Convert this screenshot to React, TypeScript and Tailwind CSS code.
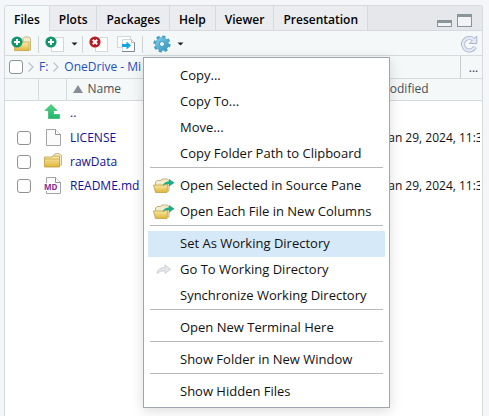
import React from "react";

const tabs = ["Files", "Plots", "Packages", "Help", "Viewer", "Presentation"];

function Defs() {
  return (
    <svg className="absolute size-0" aria-hidden="true">
      <defs>
        <linearGradient id="gold" x1="0" y1="0" x2="0" y2="1">
          <stop offset="0" stopColor="#fbeeb0" />
          <stop offset="1" stopColor="#dfb53a" />
        </linearGradient>
        <linearGradient id="gear" x1="0" y1="0" x2="1" y2="1">
          <stop offset="0" stopColor="#8ad0ea" />
          <stop offset="1" stopColor="#2b94c0" />
        </linearGradient>
        <linearGradient id="up" x1="0" y1="0" x2="0" y2="1">
          <stop offset="0" stopColor="#4fd487" />
          <stop offset="1" stopColor="#1fb868" />
        </linearGradient>
      </defs>
    </svg>
  );
}

function PlusBadge() {
  return (
    <>
      <circle cx="6" cy="6" r="5.600" fill="#12976b" />
      <path d="M6 3 V9 M3 6 H9" stroke="#fff" strokeWidth="2" />
    </>
  );
}

function NewFolderIcon() {
  return (
    <svg width="21" height="16" viewBox="0 0 21 16">
      <path d="M12 5 V2.500 L13.500 1 H18 L19.500 2.500 V14 H12Z" fill="#f3edd0" stroke="#b9a867" strokeWidth="0.8" />
      <path d="M3.500 6 H18 V14.600 H3.500Z" fill="url(#gold)" stroke="#c5a348" strokeWidth="0.8" />
      <PlusBadge />
    </svg>
  );
}

function NewFileIcon() {
  return (
    <svg width="20" height="16" viewBox="0 0 20 16">
      <rect x="6.500" y="1.500" width="12" height="14" fill="#fff" stroke="#d3d7da" />
      <PlusBadge />
    </svg>
  );
}

function DeleteIcon() {
  return (
    <svg width="20" height="16" viewBox="0 0 20 16">
      <rect x="6.500" y="1.500" width="12" height="14" fill="#fff" stroke="#d3d7da" />
      <circle cx="6" cy="6" r="5.600" fill="#b81c22" />
      <path d="M3.800 3.800 L8.200 8.200 M8.200 3.800 L3.800 8.200" stroke="#fff" strokeWidth="2" />
    </svg>
  );
}

function MoveIcon() {
  return (
    <svg width="19" height="16" viewBox="0 0 19 16">
      <rect x="0.500" y="0.500" width="13" height="11" fill="#fff" stroke="#d3d7da" />
      <path d="M5.500 3.500 H14.500 L17.500 6.500 V15.500 H5.500Z" fill="#fff" stroke="#d3d7da" />
      <path d="M17.500 6 V15.500 H5" fill="none" stroke="#7f878d" />
      <path d="M14.500 3.500 V6.500 H17.500" fill="none" stroke="#b5bbc0" />
      <path d="M5 8 H9.500 V5.500 L14 9.500 L9.500 13.500 V11 H5Z" fill="#13a4e8" />
    </svg>
  );
}

function GearIcon() {
  return (
    <svg width="18" height="18" viewBox="0 0 18 18">
      <circle cx="9" cy="9" r="7.400" fill="none" stroke="#3f9fc6" strokeWidth="2.400" strokeDasharray="3.200 2.612" />
      <circle cx="9" cy="9" r="6.600" fill="url(#gear)" stroke="#4aa3c8" strokeWidth="0.6" />
      <circle cx="9" cy="9" r="2.500" fill="#eef7fa" stroke="#2a86ad" strokeWidth="0.8" />
    </svg>
  );
}

function RefreshIcon() {
  return (
    <svg width="18" height="18" viewBox="0 0 18 18">
      <path d="M13.500 4.500 A6.300 6.300 0 1 0 15 12" fill="none" stroke="#a9b6ca" strokeWidth="4" />
      <path d="M16.800 1 V8.500 H9.300Z" fill="#e3eaf5" stroke="#a9b6ca" />
      <path d="M14 5 A6.300 6.300 0 1 0 14.800 12.400" fill="none" stroke="#e3eaf5" strokeWidth="2.400" />
    </svg>
  );
}

function Caret() {
  return (
    <svg width="7" height="4" viewBox="0 0 7 4">
      <path d="M0.500 0.500 H6.500 L3.500 3.500Z" fill="#222" />
    </svg>
  );
}

function UpIcon() {
  return (
    <svg width="18" height="18" viewBox="0 0 18 18">
      <path d="M7 0.500 L13 6.500 H9.500 V10.500 H15.500 V14.500 H4.500 V6.500 H1Z" fill="url(#up)" stroke="#2fb56c" strokeWidth="0.7" />
    </svg>
  );
}

function FileIcon() {
  return (
    <svg width="18" height="18" viewBox="0 0 18 18">
      <path d="M2.500 0.500 H11.500 L16.500 5.500 V16.500 H2.500Z" fill="#fbfbfc" stroke="#a3a6a9" />
      <path d="M11.500 0.500 V5.500 H16.500" fill="#fff" stroke="#8d9194" />
    </svg>
  );
}

function FolderIcon() {
  return (
    <svg width="18" height="18" viewBox="0 0 18 18">
      <path d="M9 5 V2.500 L11 0.500 H15 L17.500 2.500 V12 H9Z" fill="#f3ecd0" stroke="#b9a867" strokeWidth="0.8" />
      <path d="M0.500 4 H8 L9 3 H15.500 V14 H0.500Z" fill="url(#gold)" stroke="#c09c3c" strokeWidth="0.8" />
      <path d="M1 6 H15" stroke="#c9a850" strokeWidth="0.8" />
    </svg>
  );
}

function MdIcon() {
  return (
    <span className="relative block size-[18px]">
      <FileIcon />
      <span className="absolute top-[6px] left-0 bg-white text-[8px] leading-[8px] font-bold text-[#8a2a93]">MD</span>
    </span>
  );
}

function OpenFolderIcon() {
  return (
    <svg width="22" height="16" viewBox="0 0 22 16" className="shrink-0">
      <path d="M2.500 13 V4 L4 2.500 H8 L9 1 H14.500 L16 3 V13Z" fill="#f2ebcd" stroke="#b8a566" strokeWidth="0.8" />
      <path d="M0.500 7 H12.500 L14.500 6 L14 14.500 H2.500Z" fill="url(#gold)" stroke="#c19e42" strokeWidth="0.8" />
      <path d="M9.500 8 Q11 3.500 16 3.500 V1 L21.500 4.800 L16 8.500 V6 Q12 5.500 9.500 8Z" fill="#1aae86" />
    </svg>
  );
}

function GoIcon() {
  return (
    <svg width="16" height="12" viewBox="0 0 16 12">
      <path d="M1 9.500 Q1.500 3.500 9 3.500 V0.800 L14.500 5.300 L9 9.500 V6.700 Q4 6.500 1 9.500Z" fill="#e3e6eb" stroke="#c6cbd2" strokeWidth="0.8" />
    </svg>
  );
}

function Chevron() {
  return (
    <svg width="6" height="10" viewBox="0 0 6 10" className="shrink-0">
      <path d="M0.500 0.500 L5 5 L0.500 9.500" fill="none" stroke="#bcc1c5" strokeWidth="1.200" />
    </svg>
  );
}

function Divider() {
  return <span className="h-[17px] w-px bg-[#cfd3d6]" />;
}

function Check({ label }: { label: string }) {
  return (
    <input
      type="checkbox"
      aria-label={label}
      className="block size-[14px] shrink-0 appearance-none rounded-[3px] border border-[#8f9396] bg-white"
    />
  );
}

type Row = { name: string; icon: React.ReactNode; modified?: string };
const rows: Row[] = [
  { name: "LICENSE", icon: <FileIcon />, modified: "Jan 29, 2024, 11:3" },
  { name: "rawData", icon: <FolderIcon /> },
  { name: "README.md", icon: <MdIcon />, modified: "Jan 29, 2024, 11:3" },
];

type Item = { text: string; icon?: React.ReactNode; active?: boolean };
const groups: Item[][] = [
  [{ text: "Copy..." }, { text: "Copy To..." }, { text: "Move..." }, { text: "Copy Folder Path to Clipboard" }],
  [
    { text: "Open Selected in Source Pane", icon: <OpenFolderIcon /> },
    { text: "Open Each File in New Columns", icon: <OpenFolderIcon /> },
  ],
  [
    { text: "Set As Working Directory", active: true },
    { text: "Go To Working Directory", icon: <GoIcon /> },
    { text: "Synchronize Working Directory" },
  ],
  [{ text: "Open New Terminal Here" }],
  [{ text: "Show Folder in New Window" }],
  [{ text: "Show Hidden Files" }],
];

function Menu() {
  return (
    <div
      role="menu"
      className="absolute top-[57px] left-[143px] w-[247px] border border-[#a1a5ac] bg-white px-1 pt-[5px] pb-0.5 shadow-[0_3px_12px_rgba(0,0,0,0.14)]"
    >
      {groups.map((group, g) => (
        <React.Fragment key={g}>
          {g > 0 && <hr className="mx-0.5 mb-[5px] border-t border-[#b9b9b9]" />}
          {group.map((item) => (
            <button
              key={item.text}
              role="menuitem"
              className={`flex h-[26px] w-full items-center text-left text-[13px] whitespace-nowrap text-[#111] ${
                item.active ? "bg-[#d6e9f8]" : ""
              }`}
            >
              <span className="flex w-8 shrink-0 justify-center">{item.icon}</span>
              {item.text}
            </button>
          ))}
        </React.Fragment>
      ))}
    </div>
  );
}

export default function App() {
  return (
    <div className="relative flex h-screen flex-col overflow-hidden bg-[#f4f6f9] pt-[5px] pr-1.5 pl-1 font-['Open_Sans','Noto_Sans',sans-serif] text-[12px] text-[#111]">
      <Defs />
      <div className="flex grow flex-col overflow-hidden rounded-t-[3px] border border-b-0 border-[#d6dadc] bg-white">
        <div className="flex h-[25px] shrink-0 bg-[#e6e7ea]" role="tablist">
          {tabs.map((tab, i) => (
            <button
              key={tab}
              role="tab"
              aria-selected={i === 0}
              className={`border-r border-[#d6dadc] px-[9px] pt-[3px] text-[12px] font-semibold text-black ${
                i === 0 ? "bg-[#f4f8f9] pb-px" : "border-b bg-[#ebecef]"
              }`}
            >
              {tab}
            </button>
          ))}
          <div className="flex grow items-end justify-end gap-[5px] border-b border-[#d6dadc] pr-2.5 pb-[3px]">
            <button aria-label="Minimize" className="h-[7px] w-[15px] border border-t-[3px] border-[#8a959b] bg-[#f1f3f4]" />
            <button aria-label="Maximize" className="h-[13px] w-[15px] border border-t-[3px] border-[#8a959b] bg-[#f1f3f4]" />
          </div>
        </div>

        <div className="flex h-[25px] shrink-0 items-center border-b border-[#d6dadc] bg-[#f4f8f9] pt-0.5 pr-1 pl-1.5">
          <button aria-label="New folder" className="mr-1.5"><NewFolderIcon /></button>
          <Divider />
          <button aria-label="New file" className="ml-1.5"><NewFileIcon /></button>
          <button aria-label="New file options" className="mr-1 ml-1.5"><Caret /></button>
          <Divider />
          <button aria-label="Delete" className="ml-1.5"><DeleteIcon /></button>
          <button aria-label="Move" className="mr-1.5 ml-2"><MoveIcon /></button>
          <Divider />
          <button aria-label="More" className="ml-2.5 flex items-center gap-1.5"><GearIcon /><Caret /></button>
          <button aria-label="Refresh" className="ml-auto"><RefreshIcon /></button>
        </div>

        <div className="flex h-[23px] shrink-0 border-b border-[#d6dadc] bg-[#f4f8f9] pl-1">
          <nav className="flex grow items-center gap-[5px] whitespace-nowrap">
            <Check label="Select all" />
            <Chevron />
            <a href="#f" className="text-[#1f4fc0]">F:</a>
            <Chevron />
            <a href="#onedrive" className="text-[#1f4fc0]">OneDrive - Mi</a>
          </nav>
          <button aria-label="Go to directory" className="w-[22px] border-l border-[#c9cdd0] pt-0.5 pl-1 text-[#333]">...</button>
        </div>

        <table className="w-full table-fixed border-collapse whitespace-nowrap">
          <colgroup>
            <col className="w-[33px]" />
            <col className="w-7" />
            <col />
            <col className="w-[103px]" />
          </colgroup>
          <thead>
            <tr className="h-[21px] border-b border-[#d6dadc] bg-[#f4f8f9] text-[#4a5055]">
              <th className="border-r border-[#d6dadc] p-0" />
              <th className="border-r border-[#d6dadc] p-0" />
              <th className="p-0 pl-1.5 text-left font-normal">
                <span className="flex items-center gap-[5px]">
                  <svg width="10" height="8" viewBox="0 0 10 8"><path d="M5 0 L10 8 H0Z" fill="#868d96" /></svg>
                  Name
                </span>
              </th>
              <th className="p-0 text-left font-normal">Modified</th>
            </tr>
          </thead>
          <tbody>
            <tr className="h-[26px]">
              <td className="p-0" />
              <td className="p-0 pl-1.5"><UpIcon /></td>
              <td className="p-0 pl-1"><a href="#up" className="text-[#10109a]">..</a></td>
              <td className="p-0" />
            </tr>
            {rows.map((row) => (
              <tr key={row.name} className="h-[24px]">
                <td className="p-0 pl-3"><Check label={`Select ${row.name}`} /></td>
                <td className="p-0 pl-1.5">{row.icon}</td>
                <td className="p-0 pl-1"><a href={`#${row.name}`} className="text-[#10109a]">{row.name}</a></td>
                <td className="p-0 pr-0.5 pl-1.5"><div className="overflow-hidden">{row.modified}</div></td>
              </tr>
            ))}
          </tbody>
        </table>
      </div>
      <Menu />
    </div>
  );
}
